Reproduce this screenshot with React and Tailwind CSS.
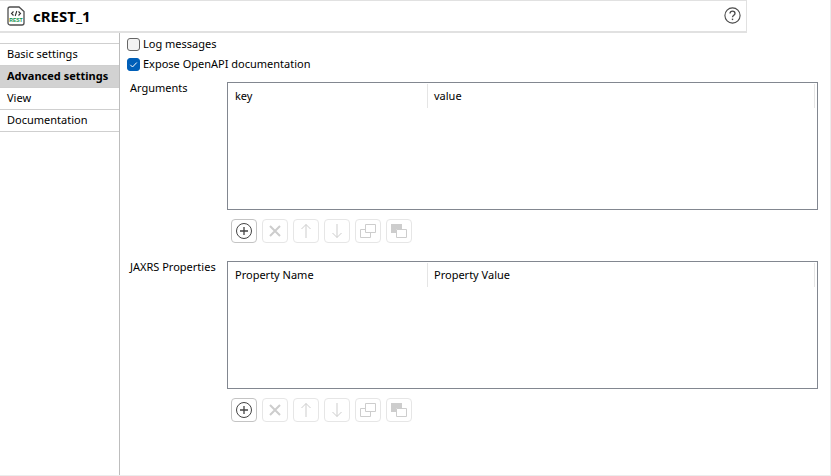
import React, { useState } from 'react'

const tabs = ['Basic settings', 'Advanced settings', 'View', 'Documentation']

const tools = [
  {
    name: 'Add',
    icon: (
      <>
        <circle cx="9" cy="9" r="7.5" />
        <path d="M9 5v8M5 9h8" strokeWidth="1.3" />
      </>
    ),
  },
  { name: 'Remove', icon: <path d="M4 4l10 10M14 4l-10 10" strokeWidth="2" /> },
  { name: 'Move up', icon: <path d="M9 16V2.5M4.5 7L9 2.5L13.5 7" /> },
  { name: 'Move down', icon: <path d="M9 2v13.5M4.5 11L9 15.5L13.5 11" /> },
  {
    name: 'Copy',
    icon: <path d="M6.5 2.5h10v8h-10zM6.5 7.5h-5v8h10v-5" />,
  },
  {
    name: 'Paste',
    icon: (
      <>
        <path d="M1 2h11v5H6v4H1z" fill="currentColor" stroke="none" />
        <path d="M6.5 7.5h10v8h-10z" />
      </>
    ),
  },
]

function RestIcon() {
  return (
    <svg width="18" height="20" viewBox="0 0 18 20" fill="none" aria-hidden="true">
      <path
        d="M3 1h9l5 4.5V17a2 2 0 0 1-2 2H3a2 2 0 0 1-2-2V3a2 2 0 0 1 2-2z"
        stroke="#4d4d4d"
        strokeWidth="1.3"
      />
      <path d="M6.5 5.5L4.5 7.5l2 2M11.5 5.5l2 2l-2 2M9.8 5l-1.6 5" stroke="#333" strokeWidth="1.1" />
      <text
        x="9"
        y="16"
        textAnchor="middle"
        fontSize="5"
        fontWeight="700"
        fontFamily="Liberation Sans, sans-serif"
        fill="#0a9048"
      >
        REST
      </text>
    </svg>
  )
}

function Header() {
  return (
    <header className="flex h-[33px] mr-[83px] items-center border-t border-r border-b-2 border-[#e1e1e1] pl-[7px] pr-[5px]">
      <RestIcon />
      <h1 className="ml-2 text-[15px] leading-5 font-bold">cREST_1</h1>
      <button aria-label="Help" className="ml-auto pb-0.5 text-[#4a4a4a]">
        <svg width="17" height="17" viewBox="0 0 17 17" fill="none" stroke="currentColor" className="block">
          <circle cx="8.5" cy="8.5" r="7.6" strokeWidth="1.1" />
          <path d="M6 6.6C6 5 7 4.2 8.5 4.2S11 5.1 11 6.4C11 8.2 8.5 8.2 8.5 10.3" strokeWidth="1.3" />
          <path d="M8.5 11.6v1.5" strokeWidth="1.4" />
        </svg>
      </button>
    </header>
  )
}

function Sidebar({ active, onSelect }) {
  return (
    <nav className="w-[120px] shrink-0 border-r border-[#bdbdbd] pt-2.5">
      <ul className="border-t border-[#cfcfcf]">
        {tabs.map((tab) => (
          <li key={tab}>
            <button
              onClick={() => onSelect(tab)}
              className={`block h-[22px] w-full border-b border-[#cfcfcf] pb-0.5 pl-[7px] text-left leading-4 whitespace-nowrap ${
                tab === active ? 'bg-[#d2d2d2] font-bold' : ''
              }`}
            >
              {tab}
            </button>
          </li>
        ))}
      </ul>
    </nav>
  )
}

function CheckOption({ label, checked, onChange }) {
  return (
    <label className="flex h-5 items-center gap-[3px]">
      <span className="grid">
        <input
          type="checkbox"
          checked={checked}
          onChange={(e) => onChange(e.target.checked)}
          className="col-start-1 row-start-1 size-[13px] appearance-none rounded-[3px] border border-[#666] bg-[#f3f3f3] checked:border-[#005fb8] checked:bg-[#005fb8]"
        />
        {checked && (
          <svg
            width="13"
            height="13"
            viewBox="0 0 13 13"
            fill="none"
            stroke="#fff"
            className="pointer-events-none col-start-1 row-start-1"
          >
            <path d="M3.3 6.8L5.5 9L9.8 4.5" />
          </svg>
        )}
      </span>
      {label}
    </label>
  )
}

function PropertyTable({ id, label, columns }) {
  return (
    <section className="flex">
      <h2 id={id} className="w-[97px] shrink-0 leading-3 whitespace-nowrap">
        {label}
      </h2>
      <div className="min-w-0 grow">
        <div className="h-32 border border-[#828790] pt-px pr-0.5">
          <table aria-labelledby={id} className="w-full table-fixed border-separate border-spacing-0">
            <thead>
              <tr className="h-6">
                <th className="w-[200px] border-r border-[#e5e5e5] pl-[7px] text-left font-normal">{columns[0]}</th>
                <th className="border-r border-[#e5e5e5] pl-1.5 text-left font-normal">{columns[1]}</th>
              </tr>
            </thead>
          </table>
        </div>
        <div className="flex gap-[5px] pt-[9px] pl-1">
          {tools.map((tool, i) => (
            <button
              key={tool.name}
              aria-label={tool.name}
              disabled={i > 0}
              className="flex h-6 w-[26px] items-center justify-center rounded-[4px] border border-[#c4c4c4] text-[#444] disabled:border-[#e6e6e6] disabled:text-[#cdcdcd]"
            >
              <svg width="18" height="18" viewBox="0 0 18 18" fill="none" stroke="currentColor" className="shrink-0">
                {tool.icon}
              </svg>
            </button>
          ))}
        </div>
      </div>
    </section>
  )
}

export default function App() {
  const [active, setActive] = useState('Advanced settings')
  const [logMessages, setLogMessages] = useState(false)
  const [exposeApi, setExposeApi] = useState(true)

  return (
    <div className="flex min-h-screen flex-col border-r border-b border-[#ececec] bg-white font-['Noto_Sans',sans-serif] text-[11px] leading-4 text-black">
      <Header />
      <div className="flex grow">
        <Sidebar active={active} onSelect={setActive} />
        <main className="min-w-0 grow pt-px pr-3 pl-[7px]">
          <CheckOption label="Log messages" checked={logMessages} onChange={setLogMessages} />
          <CheckOption label="Expose OpenAPI documentation" checked={exposeApi} onChange={setExposeApi} />
          <div className="flex flex-col gap-[18px] pt-2 pl-[3px]">
            <PropertyTable id="arguments" label="Arguments" columns={['key', 'value']} />
            <PropertyTable id="jaxrs" label="JAXRS Properties" columns={['Property Name', 'Property Value']} />
          </div>
        </main>
      </div>
    </div>
  )
}
